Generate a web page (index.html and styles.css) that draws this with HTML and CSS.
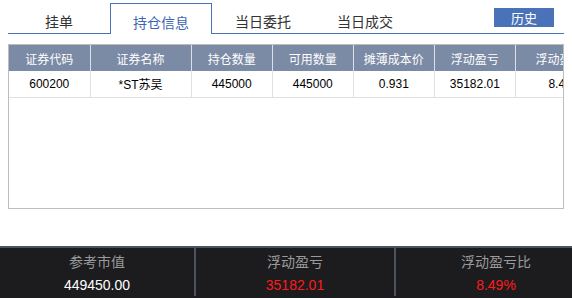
FILE: index.html
```html
<!DOCTYPE html>
<html>
<head>
    <meta charset="UTF-8">
    <title>持仓信息</title>
    <link rel="stylesheet" href="styles.css">
</head>
<body>
    <div class="page">
        <!-- 顶部标签页 -->
        <div class="tab_row">
            <span class="tab">挂单</span>
            <span class="tab active">持仓信息</span>
            <span class="tab">当日委托</span>
            <span class="tab">当日成交</span>
            <span class="btn_history">历史</span>
        </div>

        <!-- 持仓表格 -->
        <div class="table_box">
            <table class="hold_table">
                <colgroup>
                    <col style="width:81px"><col style="width:101px"><col style="width:81px"><col style="width:81px">
                    <col style="width:81px"><col style="width:81px"><col style="width:100px">
                </colgroup>
                <thead>
                    <tr>
                        <th>证券代码</th><th>证券名称</th><th>持仓数量</th><th>可用数量</th>
                        <th>摊薄成本价</th><th>浮动盈亏</th><th>浮动盈亏比</th>
                    </tr>
                </thead>
                <tbody>
                    <tr>
                        <td>600200</td><td>*ST苏吴</td><td>445000</td><td>445000</td>
                        <td>0.931</td><td>35182.01</td><td>8.49%</td>
                    </tr>
                </tbody>
            </table>
        </div>

        <!-- 底部汇总 -->
        <div class="sum_bar">
            <div class="sum_item">
                <span class="sum_label">参考市值</span>
                <span class="sum_value">449450.00</span>
            </div>
            <div class="sum_item">
                <span class="sum_label">浮动盈亏</span>
                <span class="sum_value red">35182.01</span>
            </div>
            <div class="sum_item">
                <span class="sum_label">浮动盈亏比</span>
                <span class="sum_value red">8.49%</span>
            </div>
        </div>
    </div>
</body>
</html>
```

FILE: styles.css
```css
/*公共样式*/
*{margin:0;padding:0;box-sizing:border-box;}
html,body{width:100%;height:100%;overflow:hidden;}
body{font-family:"Liberation Sans","Noto Sans CJK SC",sans-serif;background:#fff;color:#000;}

.page{height:100%;display:flex;flex-direction:column;}

/*标签页*/
.tab_row{height:34px;margin:0 8px;padding-top:3px;display:flex;align-items:stretch;border-bottom:1px solid #4a72b8;}
.tab{width:102px;font-size:14px;color:#333;display:flex;align-items:center;justify-content:center;padding-top:6px;}
.tab.active{color:#3a66b2;background:#fff;border:1px solid #4a72b8;border-bottom:none;margin-bottom:-1px;}
.btn_history{margin-left:auto;margin-right:10px;margin-top:5px;align-self:flex-start;width:60px;height:19px;background:#4a72b8;color:#fff;font-size:13px;display:flex;align-items:center;justify-content:center;}

/*表格*/
.table_box{margin:10px 8px 0;height:165px;border:1px solid #bdbdbd;overflow:hidden;}
.hold_table{border-collapse:collapse;table-layout:fixed;width:607px;}
.hold_table th{height:26px;background:#7b8aa5;color:#fff;font-weight:normal;font-size:12px;border-right:1px solid #dcdfe5;}
.hold_table td{height:26px;text-align:center;font-size:12px;color:#000;border-right:1px solid #e0e0e0;border-bottom:1px solid #e0e0e0;}

/*底部汇总*/
.sum_bar{margin-top:auto;height:52px;background:#1c1c1f;border-top:2px solid #4b5361;display:flex;width:596px;}
.sum_item{display:flex;flex-direction:column;align-items:center;padding-top:4px;margin-bottom:2px;}
.sum_item:nth-child(1){width:196px;border-right:2px solid #4b5361;}
.sum_item:nth-child(2){width:200px;border-right:2px solid #4b5361;}
.sum_item:nth-child(3){width:200px;}
.sum_label{font-size:14px;color:#9a9a9a;line-height:20px;}
.sum_value{font-size:14px;color:#fff;line-height:22px;margin-top:2px;}
.sum_value.red{color:#ff1a1a;}
```
